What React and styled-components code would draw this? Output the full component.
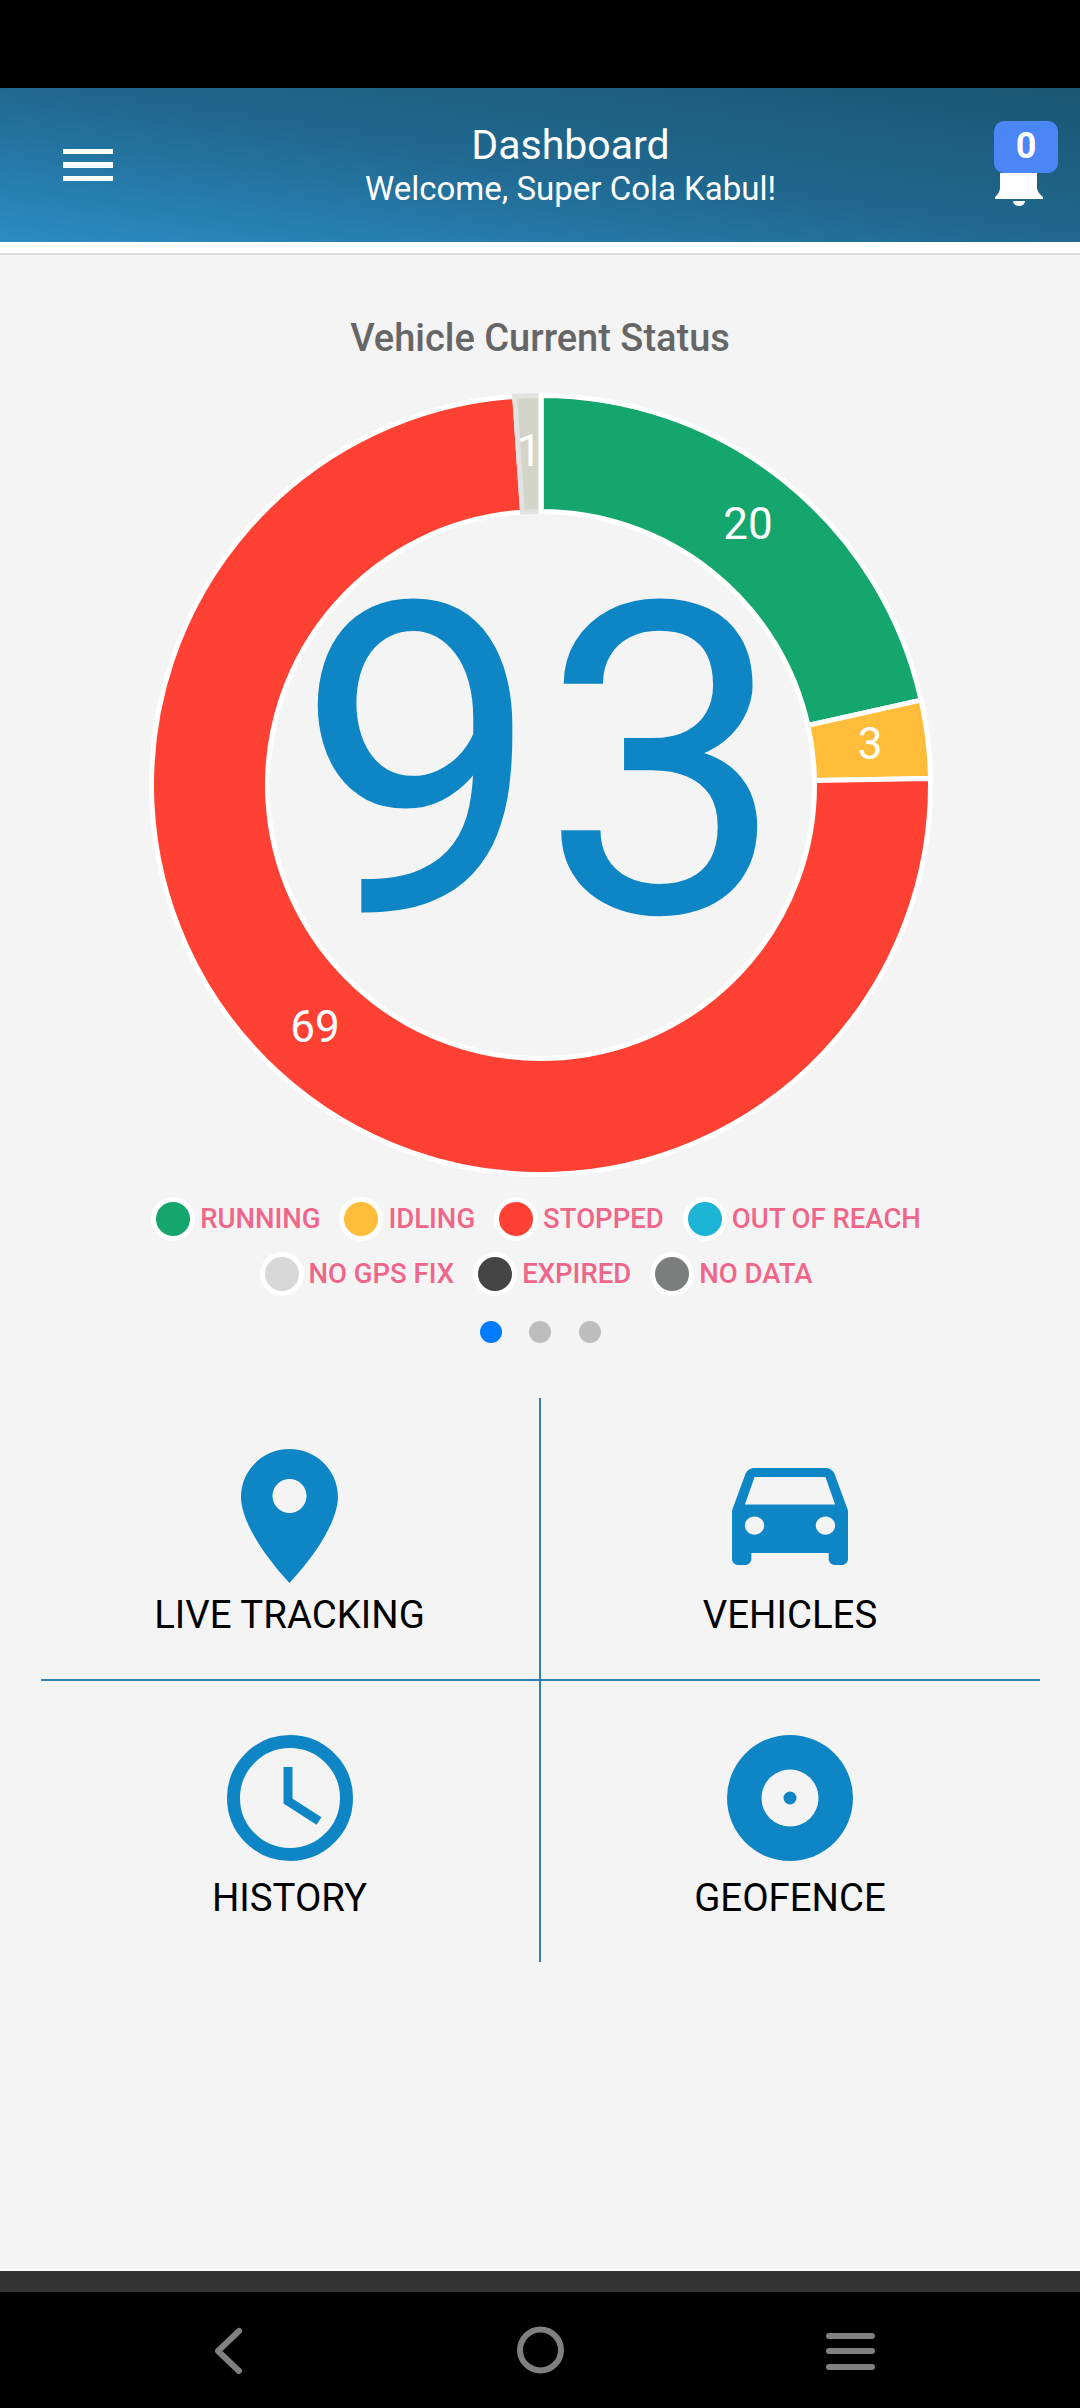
import React from "react";
import styled, { createGlobalStyle } from "styled-components";

const Global = createGlobalStyle`
  html, body { margin: 0; padding: 0; background: #000; }
  * { box-sizing: border-box; }
`;
const Page = styled.div`
  width: 1080px; height: 2408px; display: flex; flex-direction: column;
  font-family: Roboto, "Liberation Sans", sans-serif; background: #000; overflow: hidden;
`;
const StatusBar = styled.div`height: 88px; background: #000;`;
const Header = styled.header`
  height: 154px; display: flex; align-items: center; padding: 0 22px 0 63px; color: #fff;
  background: linear-gradient(to top right, #2b8cc4 0%, #20688f 50%, #1b5573 100%);
`;
const Burger = styled.div`
  width: 50px; display: flex; flex-direction: column; gap: 8px;
  span { display: block; height: 5.5px; background: #fff; }
`;
const HeaderTitle = styled.div`flex: 1; padding-left: 34px; text-align: center;`;
const TitleMain = styled.div`font-size: 41px; line-height: 44px;`;
const TitleSub = styled.div`font-size: 33px; line-height: 36px; margin-top: 4px;`;
const Notify = styled.div`width: 64px; display: flex; flex-direction: column; margin-bottom: 3px;`;
const Badge = styled.div`
  height: 52px; padding-bottom: 2px; background: #4a86f5; border-radius: 10px; display: flex; align-items: center; justify-content: center;
  font-size: 36px; font-weight: 700; color: #fff;
`;
const WhiteGap = styled.div`height: 13px; background: #fff; border-bottom: 2px solid #ddd;`;
const Body = styled.main`flex: 1; background: #f4f4f4; display: flex; flex-direction: column; align-items: center; border-bottom: 2px solid #fafafa;`;
const ChartTitle = styled.h2`
  margin: 61px 0 0; font-size: 38px; line-height: 44px; font-weight: 500; color: #666;
`;
const ChartWrap = styled.div`position: relative; width: 800px; height: 800px; margin-top: 25px; margin-left: 2px;`;
const Donut = styled.svg`display: block; width: 800px; height: 800px;`;
const SliceLabel = styled.text`font-family: Roboto, sans-serif; font-size: 44px; fill: #fff; text-anchor: middle; dominant-baseline: central;`;
const CenterNum = styled.div`
  position: absolute; inset: 0; padding-bottom: 44px; display: flex; align-items: center; justify-content: center;
  font-size: 435px; line-height: 1; color: #0e86c6;
`;
const Legend = styled.div`display: flex; flex-direction: column; align-items: center; gap: 11px; margin-top: 12px; padding-right: 8px;`;
const LegendRow = styled.div`display: flex; gap: 19px;`;
const LegendItem = styled.div`
  display: flex; align-items: center; gap: 5px; font-size: 27.5px; font-weight: 500; line-height: 44px; color: #f0668a;
`;
const Dot = styled.span`
  width: 44px; height: 44px; border-radius: 50%; border: 5px solid #fff; background: ${p => p.$c};
`;
const Pager = styled.div`display: flex; gap: 27.5px; margin-top: 25px;`;
const PageDot = styled.span`width: 22px; height: 22px; border-radius: 50%; background: ${p => (p.$on ? "#007aff" : "#bdbdbd")};`;
const MenuGrid = styled.div`
  width: 999px; margin-top: 55px; display: grid; grid-template-columns: 500px 499px; grid-template-rows: 283px 281px;
`;
const Cell = styled.div`
  display: flex; flex-direction: column; align-items: center; justify-content: flex-start;
  padding-top: ${p => p.$pt}px;
  border-right: ${p => (p.$right ? "2px solid #2f80b0" : "0")};
  border-bottom: ${p => (p.$bottom ? "2px solid #2f80b0" : "0")};
`;
const IconBox = styled.div`height: ${p => p.$h}px; display: flex; align-items: flex-end; color: #0e86c6;`;
const CellLabel = styled.div`font-size: 38.4px; line-height: 44px; color: #000; margin-top: ${p => p.$mt}px;`;
const Strip = styled.div`height: 21px; background: #333;`;
const NavBar = styled.nav`height: 116px; background: #000;`;
const NavIcons = styled.svg`display: block; width: 1080px; height: 116px;`;

const C = { x: 400, y: 400 };
const R = 389.5, r = 273.5;
const polar = (rad, turn) => {
  const a = turn * 2 * Math.PI;
  return [C.x + rad * Math.sin(a), C.y - rad * Math.cos(a)];
};
const arc = (from, to) => {
  const [a, b] = polar(R, from), [c, d] = polar(R, to), [e, f] = polar(r, to), [g, h] = polar(r, from);
  const large = to - from > 0.5 ? 1 : 0;
  return `M${a} ${b}A${R} ${R} 0 ${large} 1 ${c} ${d}L${e} ${f}A${r} ${r} 0 ${large} 0 ${g} ${h}Z`;
};
const T = 93;
const slices = [
  { from: 0, to: 20 / T, c: "#15a66d", s: "#fff" },
  { from: 20 / T, to: 23 / T, c: "#ffbd39", s: "#fff" },
  { from: 23 / T, to: 92 / T, c: "#ff4133", s: "#fff" },
  { from: 92 / T, to: 1, c: "#d4d4c8", s: "#e2e2e2" },
];
const row1 = [["RUNNING", "#15a66d"], ["IDLING", "#ffbd39"], ["STOPPED", "#ff4133"], ["OUT OF REACH", "#1db4d6"]];
const row2 = [["NO GPS FIX", "#d8d8d8"], ["EXPIRED", "#454545"], ["NO DATA", "#7b7e7d"]];

const Pin = () => (
  <svg width="97" height="134" viewBox="0 0 97 134">
    <path fill="currentColor" fillRule="evenodd" d="M48.5 0C75 0 97 21 97 48C97 68 80 100 48.5 134C17 100 0 68 0 48C0 21 22 0 48.5 0ZM48.5 30a17 17 0 1 0 0 34a17 17 0 1 0 0-34Z" />
  </svg>
);
const Car = () => (
  <svg width="116" height="97" viewBox="3 5 18 16" preserveAspectRatio="none">
    <path fill="currentColor" d="M18.92 6.01C18.72 5.42 18.16 5 17.5 5h-11c-.66 0-1.21.42-1.42 1.01L3 12v8c0 .55.45 1 1 1h1c.55 0 1-.45 1-1v-1h12v1c0 .55.45 1 1 1h1c.55 0 1-.45 1-1v-8l-2.08-5.99zM6.5 16c-.83 0-1.5-.67-1.5-1.5S5.67 13 6.5 13s1.5.67 1.5 1.5S7.33 16 6.5 16zm11 0c-.83 0-1.5-.67-1.5-1.5s.67-1.5 1.5-1.5 1.5.67 1.5 1.5-.67 1.5-1.5 1.5zM5 11l1.5-4.5h11L19 11H5z" />
  </svg>
);
const Clock = () => (
  <svg width="126" height="126" viewBox="0 0 126 126" fill="none" stroke="currentColor">
    <circle cx="63" cy="63" r="56.5" strokeWidth="13" />
    <path d="M61 32V66L92 86" strokeWidth="9" />
  </svg>
);
const Geo = () => (
  <svg width="126" height="126" viewBox="0 0 126 126">
    <circle cx="63" cy="63" r="63" fill="currentColor" />
    <circle cx="63" cy="63" r="28.5" fill="#f4f4f4" />
    <circle cx="63" cy="63" r="6.5" fill="currentColor" />
  </svg>
);

export default function App() {
  return (
    <Page>
      <Global />
      <StatusBar />
      <Header>
        <Burger><span /><span /><span /></Burger>
        <HeaderTitle>
          <TitleMain>Dashboard</TitleMain>
          <TitleSub>Welcome, Super Cola Kabul!</TitleSub>
        </HeaderTitle>
        <Notify>
          <Badge>0</Badge>
          <svg width="50" height="33" viewBox="0 0 50 33">
            <path fill="#fff" d="M6 0H43V14C43 19 46 21 49 24V26H1V24C4 21 6 19 6 14Z" />
            <path fill="#fff" d="M19 28H31C31 31 28 33 25 33C22 33 19 31 19 28Z" />
          </svg>
        </Notify>
      </Header>
      <WhiteGap />
      <Body>
        <ChartTitle>Vehicle Current Status</ChartTitle>
        <ChartWrap>
          <Donut viewBox="0 0 800 800">
            {slices.map((s) => (
              <path key={s.c} d={arc(s.from, s.to)} fill={s.c} stroke={s.s} strokeWidth="5" />
            ))}
            <path d="M400 8V129" stroke="#fff" strokeWidth="5" />
            <SliceLabel x="607" y="139">20</SliceLabel>
            <SliceLabel x="729" y="359">3</SliceLabel>
            <SliceLabel x="174" y="642">69</SliceLabel>
            <SliceLabel x="388" y="66">1</SliceLabel>
          </Donut>
          <CenterNum>93</CenterNum>
        </ChartWrap>
        <Legend>
          <LegendRow>
            {row1.map(([t, c]) => <LegendItem key={t}><Dot $c={c} />{t}</LegendItem>)}
          </LegendRow>
          <LegendRow>
            {row2.map(([t, c]) => <LegendItem key={t}><Dot $c={c} />{t}</LegendItem>)}
          </LegendRow>
        </Legend>
        <Pager><PageDot $on /><PageDot /><PageDot /></Pager>
        <MenuGrid>
          <Cell $right $bottom $pt={51}>
            <IconBox $h={134}><Pin /></IconBox>
            <CellLabel $mt={10}>LIVE TRACKING</CellLabel>
          </Cell>
          <Cell $bottom $pt={51}>
            <IconBox $h={116}><Car /></IconBox>
            <CellLabel $mt={28}>VEHICLES</CellLabel>
          </Cell>
          <Cell $right $pt={54}>
            <IconBox $h={126}><Clock /></IconBox>
            <CellLabel $mt={15}>HISTORY</CellLabel>
          </Cell>
          <Cell $pt={54}>
            <IconBox $h={126}><Geo /></IconBox>
            <CellLabel $mt={15}>GEOFENCE</CellLabel>
          </Cell>
        </MenuGrid>
      </Body>
      <Strip />
      <NavBar>
        <NavIcons viewBox="0 0 1080 116">
          <path d="M239 39L218 59L239 79" fill="none" stroke="#808080" strokeWidth="6" strokeLinecap="round" strokeLinejoin="round" />
          <circle cx="540.5" cy="58" r="20.5" fill="none" stroke="#808080" strokeWidth="6" />
          <rect x="826" y="41" width="49" height="6" rx="3" fill="#808080" />
          <rect x="826" y="56" width="49" height="6" rx="3" fill="#808080" />
          <rect x="826" y="72" width="49" height="6" rx="3" fill="#808080" />
        </NavIcons>
      </NavBar>
    </Page>
  );
}
